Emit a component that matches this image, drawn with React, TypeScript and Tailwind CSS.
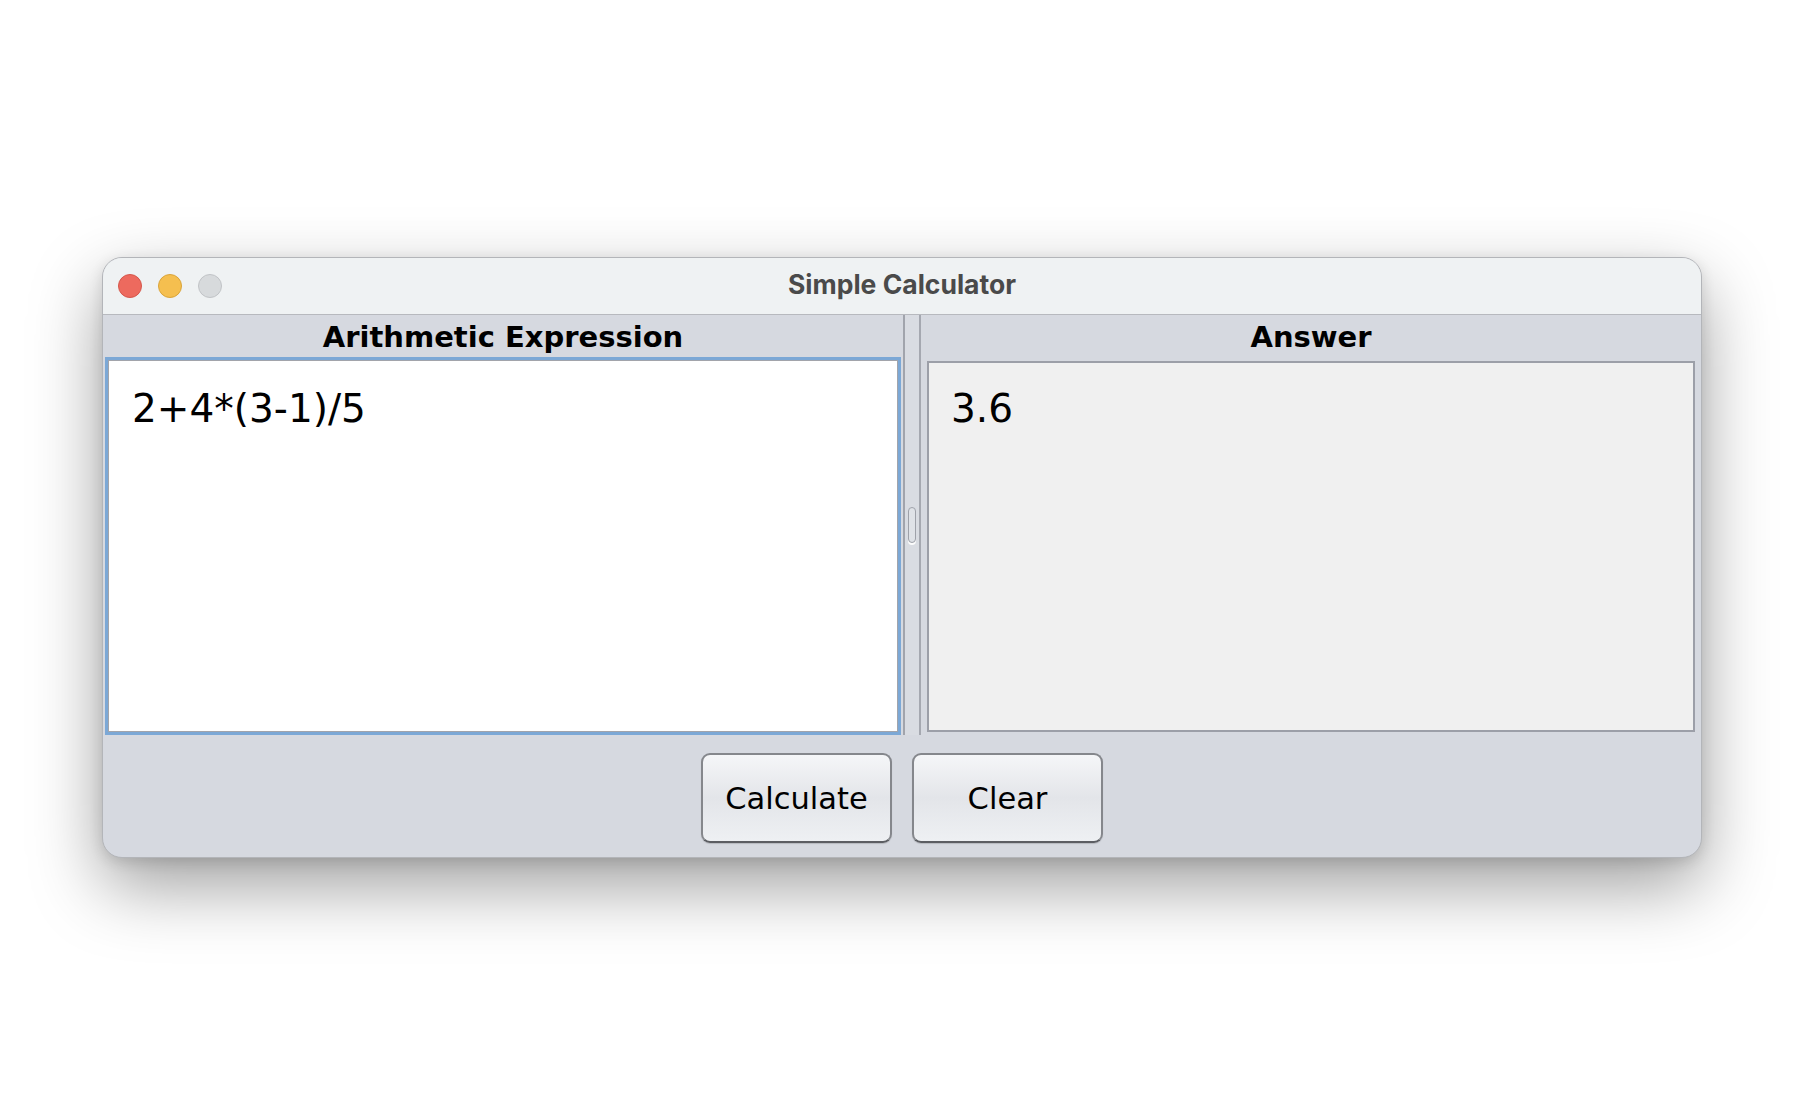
import React from "react";

const jfont = { fontFamily: '"Lucida Grande", "DejaVu Sans", sans-serif' };

export default function App() {
  return (
    <div className="w-[1804px] h-[1096px] bg-white pl-[102px] pt-[257px]">
      <div className="w-[1600px] h-[601px] rounded-[20px] border border-[#b3b5b9] overflow-hidden flex flex-col bg-[#d6d9e0] shadow-[0_28px_70px_rgba(0,0,0,0.38),0_4px_14px_rgba(0,0,0,0.12)]">
        {/* Title bar */}
        <div className="h-[57px] shrink-0 bg-[#eff2f3] border-b border-[#b7b9be] grid grid-cols-[1fr_auto_1fr] items-center">
          <div className="flex items-center gap-[16px] pl-[15px]">
            <div className="w-[24px] h-[24px] rounded-full bg-[#ed6a5e] border border-[#d4574b]" />
            <div className="w-[24px] h-[24px] rounded-full bg-[#f5bf4f] border border-[#d9a43a]" />
            <div className="w-[24px] h-[24px] rounded-full bg-[#d7dadc] border border-[#c0c3c6]" />
          </div>
          <div
            className="text-[26.5px] font-bold text-[#4a4a4a] leading-none pb-[3px]"
            style={{ fontFamily: 'Inter, "Open Sans", sans-serif' }}
          >
            Simple Calculator
          </div>
          <div />
        </div>
        {/* Body */}
        <div className="flex-1 flex flex-col">
          <div className="h-[420px] shrink-0 flex">
            {/* Left panel */}
            <div className="w-[800px] flex flex-col">
              <div
                className="h-[42px] shrink-0 flex items-center justify-center pt-[3px] text-[29px] font-bold text-black"
                style={jfont}
              >
                Arithmetic Expression
              </div>
              <div className="mx-[2px] flex-1 border-[3px] border-[#7ca8d6] bg-white">
                <div className="w-full h-full border border-[#a2a4ab] px-[23px] pt-[25px]">
                  <div className="text-[39px] leading-[1.2] text-black" style={jfont}>
                    2+4*(3-1)/5
                  </div>
                </div>
              </div>
            </div>
            {/* Divider */}
            <div className="w-[18px] shrink-0 border-x-2 border-l-[#a1a4ac] border-r-[#a5a8b0] bg-[#d9dce2] flex items-center justify-center">
              <div className="w-[8px] h-[36px] rounded-full border border-[#9ea1a9] bg-[#dfe2e7] shadow-[0_2px_0_rgba(255,255,255,0.9)]" />
            </div>
            {/* Right panel */}
            <div className="flex-1 flex flex-col">
              <div
                className="h-[42px] shrink-0 flex items-center justify-center pt-[3px] text-[29px] font-bold text-black"
                style={jfont}
              >
                Answer
              </div>
              <div className="mt-[4px] mb-[3px] mx-[6px] flex-1 border-2 border-[#9c9fa8] bg-[#f0f0f0] px-[22px] pt-[23px]">
                <div className="text-[39px] leading-[1.2] text-black" style={jfont}>
                  3.6
                </div>
              </div>
            </div>
          </div>
          {/* Buttons */}
          <div className="flex-1 flex justify-center items-start gap-[20px] pt-[18px]">
            {["Calculate", "Clear"].map((t) => (
              <div
                key={t}
                className="w-[191px] h-[90px] rounded-[9px] border-2 border-[#85878c] border-b-[#5c5e63] bg-gradient-to-b from-[#f5f6f8] via-[#e3e5e9] to-[#eef0f3] flex items-center justify-center pt-[2px] text-[30.5px] text-black shadow-[0_1px_1px_rgba(0,0,0,0.15)]"
                style={jfont}
              >
                {t}
              </div>
            ))}
          </div>
        </div>
      </div>
    </div>
  );
}
